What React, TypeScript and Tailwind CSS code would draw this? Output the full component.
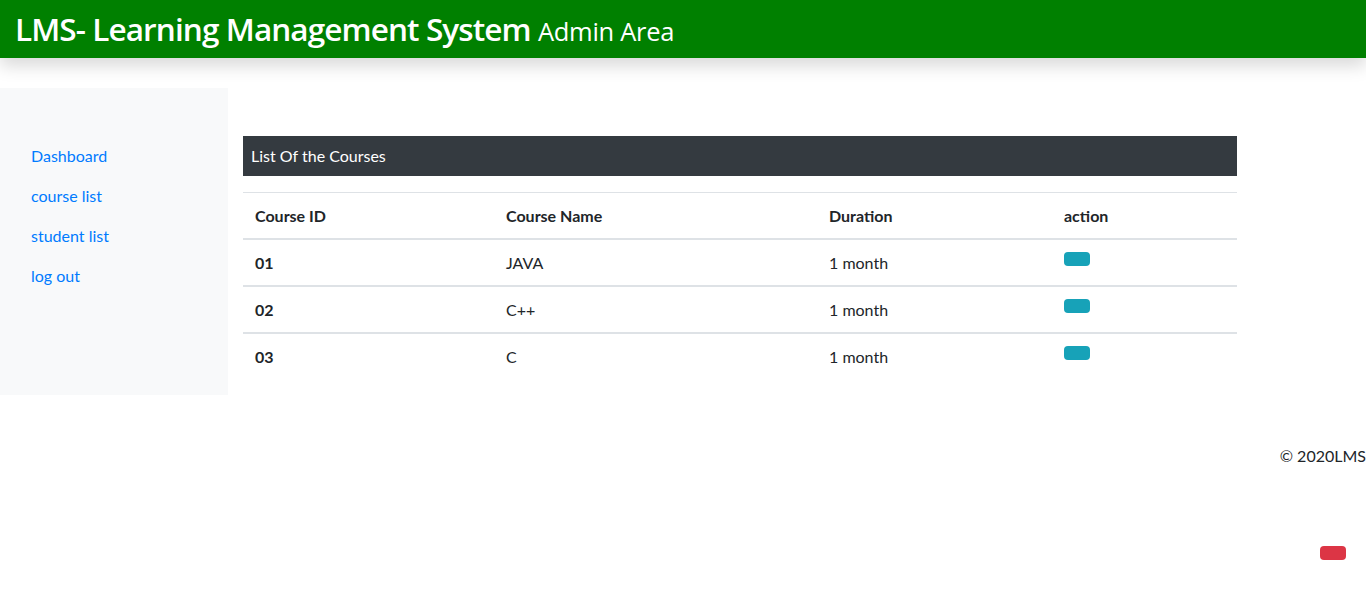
export default function App() {
  const courses = [
    { id: "01", name: "JAVA", duration: "1 month" },
    { id: "02", name: "C++", duration: "1 month" },
    { id: "03", name: "C", duration: "1 month" },
  ];

  return (
    <div className="min-h-screen bg-white text-[#212529] font-['Lato','Noto_Sans',sans-serif] text-base">
      {/* Header */}
      <header className="h-[58px] bg-[#008000] text-white flex items-center px-[15px] shadow-[0_8px_16px_rgba(0,0,0,0.15)] relative z-10">
        <h1 className="font-['Open_Sans',sans-serif] text-[31.5px] font-semibold tracking-[-0.9px] leading-none">
          LMS- Learning Management System{" "}
          <span className="text-[25.5px] font-normal tracking-[-0.3px]">Admin Area</span>
        </h1>
      </header>

      {/* Body */}
      <div className="mt-[30px] flex">
        <aside className="w-[228px] bg-[#f8f9fa] pt-[48px] px-[16px]">
          <ul className="flex flex-col">
            {["Dashboard", "course list", "student list", "log out"].map((l) => (
              <li key={l}>
                <a href="#" className="block px-[15px] py-2 leading-6 text-[#007bff]">
                  {l}
                </a>
              </li>
            ))}
          </ul>
        </aside>

        <main className="w-[1024px] px-[15px] pt-[48px] pb-[16px]">
          <div className="h-10 bg-[#343a40] text-white flex items-center px-2">List Of the Courses</div>
          <table className="w-full mt-4 border-collapse">
            <thead>
              <tr className="border-t border-[#dee2e6]">
                <th className="text-left font-bold px-3 py-3 leading-[21px] border-b-2 border-[#dee2e6] w-[251px]">Course ID</th>
                <th className="text-left font-bold px-3 py-3 leading-[21px] border-b-2 border-[#dee2e6] w-[323px]">Course Name</th>
                <th className="text-left font-bold px-3 py-3 leading-[21px] border-b-2 border-[#dee2e6] w-[235px]">Duration</th>
                <th className="text-left font-bold px-3 py-3 leading-[21px] border-b-2 border-[#dee2e6]">action</th>
              </tr>
            </thead>
            <tbody>
              {courses.map((c, i) => (
                <tr key={c.id} className={i > 0 ? "border-t-2 border-[#dee2e6]" : ""}>
                  <td className="px-3 py-3 leading-[21px] font-bold">{c.id}</td>
                  <td className="px-3 py-3 leading-[21px]">{c.name}</td>
                  <td className="px-3 py-3 leading-[21px]">{c.duration}</td>
                  <td className="px-3 pt-[12px] pb-3 align-top">
                    <button className="w-[26px] h-[14px] rounded-[4px] bg-[#17a2b8] block" />
                  </td>
                </tr>
              ))}
            </tbody>
          </table>
        </main>
      </div>

      {/* Footer */}
      <footer className="mt-[49px] text-right leading-6">© 2020LMS</footer>
      <div className="flex justify-end pr-[20px] mt-[78px]">
        <button className="w-[26px] h-[14px] rounded-[4px] bg-[#dc3545]" />
      </div>
    </div>
  );
}
